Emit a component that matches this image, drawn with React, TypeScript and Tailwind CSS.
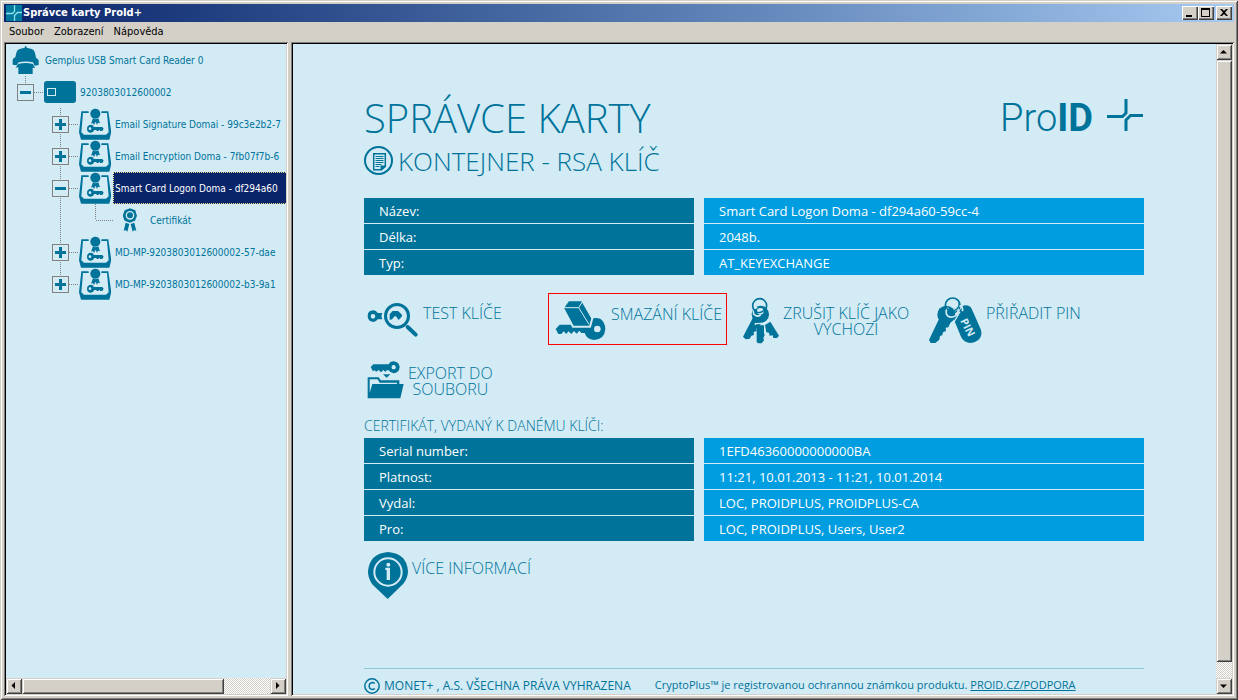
import { useState, type ReactNode } from "react";

const RAISED =
  "bg-[#d4d0c8] shadow-[inset_1px_1px_#d4d0c8,inset_-1px_-1px_#404040,inset_2px_2px_#fff,inset_-2px_-2px_#808080]";
const CAPTION_BUTTON =
  "grid h-3.5 w-4 place-items-center bg-[#d4d0c8] shadow-[inset_1px_1px_#fff,inset_-1px_-1px_#404040,inset_-2px_-2px_#808080]";
const SUNKEN =
  "p-0.5 shadow-[inset_1px_1px_#808080,inset_-1px_-1px_#fff,inset_2px_2px_#000,inset_-2px_-2px_#d4d0c8]";
const TRACK =
  "bg-[repeating-conic-gradient(#fff_0_25%,#d4d0c8_0_50%)] bg-[length:2px_2px]";

/* ---------- icons ---------- */

function AppIcon() {
  return (
    <svg className="size-4 shrink-0" viewBox="0 0 16 16" aria-hidden="true">
      <rect width="16" height="16" fill="#00799d" />
      <path d="M0 8.500h6.500L8.500 6.500V0M16 7.500h-4.500L8.500 10.500V16" fill="none" stroke="#8fe3ee" strokeWidth="1.300" />
    </svg>
  );
}

function ReaderIcon() {
  return (
    <svg className="h-7 w-[27px]" viewBox="36 138 81 84" fill="#00739a" aria-hidden="true">
      <path d="M74 143q0-5 3-5t3 5l15 4q8 2 10 12l3 14q6 3 8 8v14l-12 2-5-10q-22-5-43 0l-6 9-12-2v-14q1-6 8-8l3-14q2-9 10-11z" />
      <path d="M54 192q22-6 45 0l6 12-7-1v19H55v-20l-8 1z" />
    </svg>
  );
}

function CardIcon() {
  return (
    <svg className="h-[22px] w-8" viewBox="0 0 32 22" aria-hidden="true">
      <rect width="32" height="22" rx="3" fill="#00739a" />
      <rect x="3.500" y="7.500" width="8" height="7" fill="none" stroke="#d3ebf5" />
    </svg>
  );
}

function ContainerIcon() {
  return (
    <svg className="size-8" viewBox="237 324 96 96" fill="#00739a" aria-hidden="true">
      <path d="M244 334h22v5h-17l-5 58 8 7h66l8-7-5-58h-17v-5h21l9 63-6 22h-85l-6-22z" />
      <circle cx="286" cy="341" r="15" />
      <path d="M279 355l8 3 8-3 5 15-6-2-3 7-4-10-5 10-3-6-6 2z" />
      <path
        fillRule="evenodd"
        d="M272 374q8 0 10 7h25l4 5-4 7h-6l-3-4-3 4h-4l-3-3h-5q-3 8-11 8-11-1-11-12t11-12zm-2 8a4 4 0 1 0 0 8 4 4 0 0 0 0-8z"
      />
    </svg>
  );
}

function CertificateIcon() {
  return (
    <svg className="h-6 w-3.5" viewBox="369 172 42 72" aria-hidden="true">
      <path
        d="M390 173l8 3 8 3 2 8 3 8-3 8-3 7-8 3-7 3-8-3-8-3-3-7-3-8 3-8 3-8 8-3z"
        fill="#00739a"
      />
      <circle cx="390" cy="194" r="11" fill="none" stroke="#d3ebf5" strokeWidth="4" />
      <path d="M377 216l11 4-6 23-5-5-6 3zM403 216l-11 4 6 23 5-5 6 3z" fill="#00739a" />
    </svg>
  );
}

function DocumentIcon() {
  return (
    <svg className="size-[30px] shrink-0" viewBox="0 0 30 30" aria-hidden="true">
      <circle cx="14.500" cy="14.500" r="13.500" fill="none" stroke="#00739a" strokeWidth="2" />
      <path d="M9.700 7.700h11.600v12.800l-4 3.200H9.700z" fill="none" stroke="#00739a" strokeWidth="1.500" />
      <path d="M11.500 10.500h8M11.500 12.500h8M11.500 14.500h8M11.500 16.500h8M11.500 18.500h6M11.500 20.500h4" stroke="#00739a" />
      <path d="M16.500 19.500h5v1.500l-3.500 3h-1.500z" fill="#00739a" />
    </svg>
  );
}

function TestKeyIcon() {
  return (
    <svg className="h-9 w-[52px]" viewBox="22 54 156 108" fill="#00739a" aria-hidden="true">
      <path fillRule="evenodd" d="M41 79q9 0 13 8h14l-3 9 3 10H54q-5 8-13 8-17-2-17-18t17-17zm-1 11a7 7 0 1 0 0 14 7 7 0 0 0 0-14z" />
      <circle cx="112" cy="96" r="34.500" fill="none" stroke="#00739a" strokeWidth="9" />
      <path d="M90 108V91l9-10h16l12 11v5l-10 11-8-11h-4l-8 9z" />
      <path d="M144 129l24 23" stroke="#00739a" strokeWidth="12" strokeLinecap="round" />
    </svg>
  );
}

function EraseKeyIcon() {
  return (
    <svg className="h-[42px] w-[52px]" viewBox="584 44 156 126" fill="#00739a" aria-hidden="true">
      <path d="M586 134l12-13h80l14-17q12-5 28-1 15 12 15 31-2 31-34 33-22-2-28-21h-10l-6-7-8 9-8-8-8 9-9-8-6 8-8-8-7 8h-9z" />
      <path d="M611 66l13-18h41l31 54-7 25h-51l-30-56z" fill="#00739a" stroke="#d3ebf5" strokeWidth="6" />
      <path d="M609 70h46l31 50M655 70l13-21" fill="none" stroke="#d3ebf5" strokeWidth="3" />
      <circle cx="711" cy="134" r="10" fill="#d3ebf5" />
    </svg>
  );
}

function KeyRingIcon() {
  return (
    <svg className="h-[47px] w-[37px]" viewBox="36 34 111 141" fill="#00739a" aria-hidden="true">
      <path d="M105 118l16-10 26 42-6 7h-11l-2-8-9 1-2-9-8-1z" />
      <path d="M80 119h22v23l2 7-4 8 2 7-7 9h-11l-4-5z" />
      <circle cx="91" cy="86" r="26" />
      <path d="M68 98l26 14-8 14-7 2 1 8-9 3 1 9-8 2-5 9-12 2-8-8z" />
      <path d="M76 118v-4l28-1 12-10" fill="none" stroke="#d3ebf5" strokeWidth="4" />
      <path d="M82 65q-16 4-11 20 9 11 21 3" fill="none" stroke="#d3ebf5" strokeWidth="5" />
      <circle cx="89" cy="60" r="21" fill="none" stroke="#00739a" strokeWidth="5" />
      <circle cx="91" cy="77" r="10" fill="#d3ebf5" />
      <path d="M73 72q5 9 14 9 14-2 19-14" fill="none" stroke="#00739a" strokeWidth="4" />
    </svg>
  );
}

function PinIcon() {
  return (
    <svg className="h-[47px] w-[53px]" viewBox="598 32 159 141" fill="#00739a" aria-hidden="true">
      <path d="M700 58q18-4 26 9l27 62q7 20-8 33-20 14-40 3-7-5-11-14l-22-53z" />
      <circle cx="650" cy="85" r="27" />
      <path d="M629 96l34 12-7 15-8 1 1 10-9 4-2 9-7 2-2 11-12 10h-14l-5-9z" />
      <path d="M691 76l-18 31" stroke="#d3ebf5" strokeWidth="4" />
      <circle cx="669" cy="57" r="22" fill="none" stroke="#00739a" strokeWidth="5" />
      <path d="M656 64q-13 11-2 25 14 8 26-3 10-10 3-23l8-5q11 6 7 17" fill="none" stroke="#d3ebf5" strokeWidth="5" />
      <path d="M650 64q9 15 25 8 15-6 13-23" fill="none" stroke="#00739a" strokeWidth="4" />
      <text
        x="0"
        y="0"
        transform="translate(691 103) rotate(63)"
        fill="#d3ebf5"
        fontFamily="Open Sans, sans-serif"
        fontWeight="700"
        fontSize="32"
      >
        PIN
      </text>
    </svg>
  );
}

function ExportIcon() {
  return (
    <svg className="h-[38px] w-[37px]" viewBox="22 230 111 114" fill="#00739a" aria-hidden="true">
      <path
        fillRule="evenodd"
        d="M33 248l8-8h46q4-9 15-9 17 2 18 18-2 17-18 18-10-1-15-9h-6l-4 5-6-6-7 7-7-7-7 5-6-4-4 3zm69-6a6 6 0 1 0 0 13 6 6 0 0 0 0-13z"
      />
      <path d="M70 270h22l-11 10z" />
      <path d="M24 279h33l6 9h56v12h-7v-5H60l-6-10H30v40l8-26h94l-10 43H24z" />
    </svg>
  );
}

function InfoIcon() {
  return (
    <svg className="h-[47px] w-10" viewBox="54 36 120 141" fill="#00739a" aria-hidden="true">
      <path d="M114 36q57 5 60 58-1 22-14 37l-47 46-45-43Q54 117 54 94q4-53 60-58z" />
      <circle cx="114" cy="96" r="41" fill="none" stroke="#d3ebf5" strokeWidth="6" />
      <circle cx="115" cy="74" r="6" fill="#d3ebf5" />
      <path d="M106 83h14v37h-10V90h-4z" fill="#d3ebf5" />
    </svg>
  );
}

function LogoMark() {
  return (
    <svg className="h-8 w-9" viewBox="0 0 36 32" fill="none" stroke="#00739a" strokeWidth="3" aria-hidden="true">
      <path d="M0 17.500h15.500l3.500-3.500V0" />
      <path d="M36 16.500H23.500L19 21v11" />
    </svg>
  );
}

function CopyrightIcon() {
  return (
    <svg className="size-4 shrink-0" viewBox="0 0 16 16" fill="none" stroke="#00739a" aria-hidden="true">
      <circle cx="8" cy="8" r="7.200" strokeWidth="1.500" />
      <path d="M10.700 5.500Q9.700 4.500 8.500 4.500 5.200 4.800 5.200 8t3.300 3.500q1.300 0 2.300-1" strokeWidth="1.500" />
    </svg>
  );
}

/* ---------- tree ---------- */

type Lines = { up?: boolean; down?: boolean; right?: boolean };

function Cell({ up, down, right, children }: Lines & { children?: ReactNode }) {
  return (
    <span className="grid h-8 w-[35px] shrink-0 place-items-center">
      <svg className="h-8 w-[35px] [grid-area:1/1]" viewBox="0 0 35 32" stroke="#808080" strokeDasharray="1 1" aria-hidden="true">
        {up && <path d="M17.500 0v16" />}
        {down && <path d="M17.500 16v16" />}
        {right && <path d="M18 16.500h17" />}
      </svg>
      {children && <span className="grid place-items-center [grid-area:1/1]">{children}</span>}
    </span>
  );
}

function IconCell({ children }: { children: ReactNode }) {
  return <span className="flex h-8 w-[35px] shrink-0 items-center justify-center pr-px">{children}</span>;
}

function Expander({ open, label, onClick }: { open: boolean; label: string; onClick: () => void }) {
  return (
    <button
      type="button"
      aria-label={label}
      aria-expanded={open}
      onClick={onClick}
      className="grid size-[17px] place-items-center border border-[#808080] bg-[#d3ebf5]"
    >
      <svg className="size-[11px]" viewBox="0 0 11 11" stroke="#00739a" strokeWidth="3" aria-hidden="true">
        <path d={open ? "M0 5.500h11" : "M0 5.500h11M5.500 0v11"} />
      </svg>
    </button>
  );
}

const CONTAINERS = [
  "Email Signature Domai - 99c3e2b2-7",
  "Email Encryption Doma - 7fb07f7b-6",
  "Smart Card Logon Doma - df294a60",
  "MD-MP-9203803012600002-57-dae",
  "MD-MP-9203803012600002-b3-9a1",
];

function Tree() {
  const [cardOpen, setCardOpen] = useState(true);
  const [open, setOpen] = useState([false, false, true, false, false]);
  const [selected, setSelected] = useState(2);

  return (
    <ul className="min-h-0 flex-1 overflow-hidden pl-0.5 text-[10px] whitespace-nowrap">
      <li className="flex items-center">
        <Cell>
          <ReaderIcon />
        </Cell>
        <span className="pl-0.5">Gemplus USB Smart Card Reader 0</span>
      </li>
      <li className="flex items-center">
        <Cell up right>
          <Expander open={cardOpen} label="9203803012600002" onClick={() => setCardOpen(!cardOpen)} />
        </Cell>
        <IconCell>
          <CardIcon />
        </IconCell>
        <span className="pl-0.5">9203803012600002</span>
      </li>
      {cardOpen &&
        CONTAINERS.map((name, i) => {
          const last = i === CONTAINERS.length - 1;
          return (
            <li key={name}>
              <div className="flex items-center">
                <Cell />
                <Cell up down={!last} right>
                  <Expander
                    open={open[i]}
                    label={name}
                    onClick={() => setOpen(open.map((value, j) => (j === i ? !value : value)))}
                  />
                </Cell>
                <IconCell>
                  <ContainerIcon />
                </IconCell>
                <button
                  type="button"
                  onClick={() => setSelected(i)}
                  className={
                    selected === i
                      ? "h-8 flex-1 border border-r-0 border-dotted border-[#f5db95] bg-[#0a246a] pl-px text-left text-white"
                      : "h-8 flex-1 pl-0.5 text-left"
                  }
                >
                  {name}
                </button>
              </div>
              {open[i] && (
                <div className="flex items-center">
                  <Cell />
                  <Cell up={!last} down={!last} />
                  <Cell up right />
                  <IconCell>
                    <CertificateIcon />
                  </IconCell>
                  <span className="pl-0.5">Certifikát</span>
                </div>
              )}
            </li>
          );
        })}
    </ul>
  );
}

/* ---------- main pane ---------- */

function DataTable({ rows }: { rows: [string, string][] }) {
  return (
    <table className="w-full table-fixed border-separate border-spacing-0 text-[13px] text-white">
      <tbody>
        {rows.map(([label, value]) => (
          <tr key={label} className="h-[26px]">
            <th
              scope="row"
              className="w-[330px] border-b border-[#d3ebf5] bg-[#00739a] py-0 pl-[15px] text-left leading-5 font-normal"
            >
              {label}
            </th>
            <td className="w-2.5 p-0" />
            <td className="border-b border-[#d3ebf5] bg-[#009de0] py-0 pl-[15px] leading-5">{value}</td>
          </tr>
        ))}
      </tbody>
    </table>
  );
}

function Action({ icon, children, marked }: { icon: ReactNode; children: ReactNode; marked?: boolean }) {
  return (
    <button
      type="button"
      className={
        marked
          ? "flex h-[52px] w-[179px] items-center gap-1 border border-[#f00] pl-1.5"
          : "flex h-[52px] items-center gap-1 pl-[3px]"
      }
    >
      <span className="pt-0.5">{icon}</span>
      <span className="self-start pt-3 text-center text-base leading-4 font-light whitespace-pre">{children}</span>
    </button>
  );
}

function Arrow({ d, label }: { d: string; label: string }) {
  return (
    <button type="button" aria-label={label} className={`grid size-4 shrink-0 place-items-center ${RAISED}`}>
      <svg className="size-4" viewBox="0 0 16 16" aria-hidden="true">
        <path d={d} />
      </svg>
    </button>
  );
}

export default function App() {
  return (
    <div className="flex h-screen flex-col overflow-hidden bg-[#d4d0c8] p-1 font-['DejaVu_Sans_Condensed','Noto_Sans',sans-serif] text-[#00739a] shadow-[inset_1px_1px_#d4d0c8,inset_-1px_-1px_#404040,inset_2px_2px_#fff,inset_-2px_-2px_#808080]">
      <header className="flex h-[18px] shrink-0 items-center bg-linear-to-r from-[#0a246a] to-[#a6caf0] px-0.5 text-white">
        <AppIcon />
        <h1 className="flex-1 pl-px text-[11px] font-bold">Správce karty ProId+</h1>
        <button type="button" aria-label="Minimize" className={CAPTION_BUTTON}>
          <svg className="h-3.5 w-4" viewBox="0 0 16 14" aria-hidden="true">
            <path d="M4 9h6v2H4z" />
          </svg>
        </button>
        <button type="button" aria-label="Maximize" className={CAPTION_BUTTON}>
          <svg className="h-3.5 w-4" viewBox="0 0 16 14" aria-hidden="true">
            <path fillRule="evenodd" d="M3 2h9v9H3zm1 2v6h7V4z" />
          </svg>
        </button>
        <button type="button" aria-label="Close" className={`ml-0.5 ${CAPTION_BUTTON}`}>
          <svg className="h-3.5 w-4" viewBox="0 0 16 14" aria-hidden="true">
            <path d="M4 3h2l2 2 2-2h2L9 6.500 12 10h-2L8 8l-2 2H4l3-3.500z" />
          </svg>
        </button>
      </header>

      <nav className="flex h-5 shrink-0 items-center gap-2.5 pl-[5px] text-[11px] text-black">
        <button type="button">Soubor</button>
        <button type="button">Zobrazení</button>
        <button type="button">Nápověda</button>
      </nav>

      <div className="flex min-h-0 flex-1 gap-[3px]">
        <aside className={`flex w-[284px] shrink-0 flex-col bg-[#d3ebf5] ${SUNKEN}`}>
          <Tree />
          <div className={`flex h-4 shrink-0 ${TRACK}`}>
            <Arrow label="Scroll left" d="M9 4v7L5.500 7.500z" />
            <div className={`w-[202px] ${RAISED}`} />
            <span className="flex-1" />
            <Arrow label="Scroll right" d="M6 4v7l3.500-3.500z" />
          </div>
        </aside>

        <div className={`flex min-w-0 flex-1 bg-[#d3ebf5] ${SUNKEN}`}>
          <main className="flex min-w-0 flex-1 flex-col overflow-hidden pr-18 pl-[71px] font-['Open_Sans','Noto_Sans',sans-serif]">
            <div className="flex items-start justify-between pt-12">
              <h2 className="text-[40px] leading-[52px] font-light">SPRÁVCE KARTY</h2>
              <div className="flex items-center gap-3.5 pt-1.5 pr-px">
                <span className="font-['Roboto',sans-serif] text-[38px] leading-10 font-light">
                  Pro<b className="font-bold">ID</b>
                </span>
                <span className="self-start pt-px">
                  <LogoMark />
                </span>
              </div>
            </div>
            <h3 className="flex h-[34px] items-center gap-1 text-[26px] font-light">
              <DocumentIcon />
              KONTEJNER - RSA KLÍČ
            </h3>

            <div className="pt-5">
              <DataTable
                rows={[
                  ["Název:", "Smart Card Logon Doma - df294a60-59cc-4"],
                  ["Délka:", "2048b."],
                  ["Typ:", "AT_KEYEXCHANGE"],
                ]}
              />
            </div>

            <div className="grid grid-cols-[184px_191px_187px_auto] gap-y-2 pt-[17px]">
              <Action icon={<TestKeyIcon />}>TEST KLÍČE</Action>
              <Action icon={<EraseKeyIcon />} marked>
                SMAZÁNÍ KLÍČE
              </Action>
              <Action icon={<KeyRingIcon />}>{"ZRUŠIT KLÍČ JAKO\nVÝCHOZÍ"}</Action>
              <Action icon={<PinIcon />}>PŘIŘADIT PIN</Action>
              <Action icon={<ExportIcon />}>{"EXPORT DO\nSOUBORU"}</Action>
            </div>

            <h4 className="pt-[9px] text-sm leading-6 font-light">CERTIFIKÁT, VYDANÝ K DANÉMU KLÍČI:</h4>
            <DataTable
              rows={[
                ["Serial number:", "1EFD46360000000000BA"],
                ["Platnost:", "11:21, 10.01.2013 - 11:21, 10.01.2014"],
                ["Vydal:", "LOC, PROIDPLUS, PROIDPLUS-CA"],
                ["Pro:", "LOC, PROIDPLUS, Users, User2"],
              ]}
            />
            <div className="flex pt-1.5 pl-px">
              <Action icon={<InfoIcon />}>VÍCE INFORMACÍ</Action>
            </div>

            <footer className="mt-auto flex h-[26px] items-center gap-1 border-t border-[#8ec6da] pt-2">
              <CopyrightIcon />
              <span className="text-xs">MONET+ , A.S. VŠECHNA PRÁVA VYHRAZENA</span>
              <span className="pl-5 text-[11px]">
                CryptoPlus™ je registrovanou ochrannou známkou produktu.{" "}
                <a href="#podpora" className="underline">
                  PROID.CZ/PODPORA
                </a>
              </span>
            </footer>
          </main>

          <div className={`flex w-4 shrink-0 flex-col ${TRACK}`}>
            <Arrow label="Scroll up" d="M4 9.500h7L7.500 6z" />
            <div className={`max-h-[603px] flex-1 ${RAISED}`} />
            <span className="min-h-4" />
            <Arrow label="Scroll down" d="M4 6.500h7L7.500 10z" />
          </div>
        </div>
      </div>
    </div>
  );
}
